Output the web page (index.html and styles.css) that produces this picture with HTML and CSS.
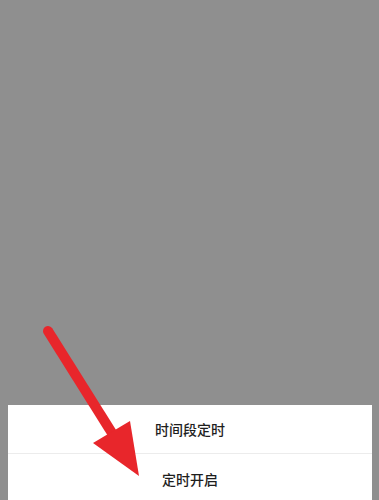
FILE: index.html
```html
<!DOCTYPE html>
<html lang="zh">
<head>
<meta charset="utf-8">
<link rel="stylesheet" href="styles.css">
</head>
<body>
<div class="screen">
  <div class="backdrop"></div>
  <div class="sheet">
    <div class="item">时间段定时</div>
    <div class="item last">定时开启</div>
  </div>
  <svg class="arrow" width="379" height="500" viewBox="0 0 379 500">
    <line x1="48" y1="331" x2="112" y2="433" stroke="#e8262b" stroke-width="10" stroke-linecap="round"/>
    <polygon points="93,443 130,421 139,476" fill="#e8262b"/>
  </svg>
</div>
</body>
</html>
```
FILE: styles.css
```css
html, body {
  margin: 0;
  padding: 0;
}
body {
  background: #8f8f8f;
  font-family: "Noto Sans CJK SC", "Noto Sans", sans-serif;
}
.screen {
  position: relative;
  width: 379px;
  height: 500px;
  overflow: hidden;
  display: flex;
  flex-direction: column;
}
.backdrop {
  flex: 1;
}
.sheet {
  margin: 0 7px 0 8px;
  background: #ffffff;
  display: flex;
  flex-direction: column;
}
.item {
  height: 48px;
  display: flex;
  align-items: center;
  justify-content: center;
  font-size: 14px;
  font-weight: 500;
  color: #1e1e1e;
  border-bottom: 1px solid #ececec;
}
.item.last {
  border-bottom: none;
  height: 46px;
  padding-top: 4px;
  box-sizing: border-box;
  height: 46px;
  align-items: flex-start;
  padding-top: 15px;
  line-height: 20px;
}
.arrow {
  position: absolute;
  left: 0;
  top: 0;
}
```
